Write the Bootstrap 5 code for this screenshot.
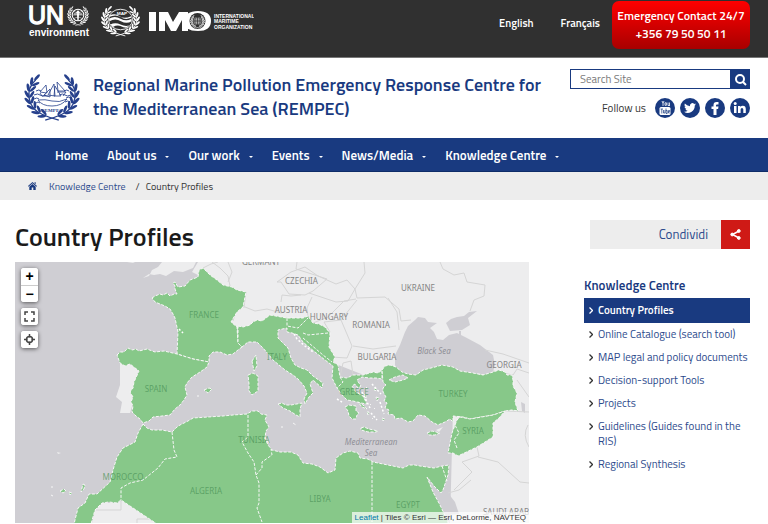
<!DOCTYPE html>
<html lang="en">
<head>
<meta charset="utf-8">
<meta name="viewport" content="width=device-width, initial-scale=1">
<title>Country Profiles - REMPEC</title>
<link href="https://cdn.jsdelivr.net/npm/bootstrap@5.3.0/dist/css/bootstrap.min.css" rel="stylesheet">
<style>
:root{--navy:#193a80}
body{font-family:"Titillium Web",Roboto,"Liberation Sans",sans-serif;font-size:11px;color:#333;background:#fff}
a{text-decoration:none;color:#2c4a8c}
svg{display:block}
.topbar{background:#303030;height:58px;border-bottom:1px solid #777;padding:0 18px 0 28px}
.topbar a{color:#fff;font-size:11px;font-weight:600}
.langs{gap:27px;margin:15px 12px 0 0}
.topbar .emergency{background:linear-gradient(#f00,#a80000);border-radius:7px;font-size:12px;line-height:18px;width:138px;height:48px;margin-top:1px;padding-top:6px}
.masthead{padding:11px 18px 0 24px;height:80px;gap:13px}
.site-title{color:var(--navy);font-size:18px;line-height:24px;font-weight:600;margin:4px 0 0}
.tools{width:180px}
.search-field{height:20px;min-width:0;border:1px solid var(--navy);padding:0 9px;font-size:11px;outline:0}
.search-field::placeholder{color:#777}
.search-btn{width:19px;height:20px;border:0;background:var(--navy);padding:0}
.follow{gap:5px;margin-top:9px}
.mainnav{background:var(--navy);min-height:34px;padding:0 55px;gap:19px;border-bottom:1px solid #0e2c68}
.mainnav a{color:#fff;font-size:13px;font-weight:600;line-height:20px}
.mainnav .dropdown-toggle::after{margin-left:9px;border-width:2px;vertical-align:2px}
.crumbs{background:#ededed;height:28px;padding:0 28px;font-size:10px}
.crumbs .slash{margin:0 6px 0 10px}
.page{padding:19px 18px 0 15px;gap:55px}
.page h1{font-size:26px;line-height:36px;font-weight:600;color:#1a1a1a;margin:0 0 7px}
.side{width:166px}
.share{background:#ededed;height:29px;margin:1px 0 0 6px;font-size:13px;gap:13px}
.share button{width:29px;height:29px;border:0;background:#cf1a16;padding:0}
.side h2{font-size:13px;line-height:18px;font-weight:600;color:var(--navy);margin:27px 0 4px}
.side li a{padding:4px 0 4px 5px;line-height:15px;font-size:11px;gap:5px}
.side li.current a{background:var(--navy);color:#fff;font-weight:600;padding-top:5px;padding-bottom:5px}
.side li svg{margin-top:4px;flex:none}
.mapbox{background:#cfced3;overflow:hidden}
.mapbtns{top:6px;left:6px;gap:6px}
.mapbtns button{width:17px;height:17px;border:0;background:#fff;padding:0;font:bold 14px/17px "Liberation Sans",sans-serif;color:#000}
.ctl{border-radius:3px;box-shadow:0 1px 4px rgba(0,0,0,.6);overflow:hidden;background:#fff}
.ctl button+button{border-top:1px solid #ccc}
.attrib{font:8px/11px "Liberation Sans",sans-serif;background:rgba(255,255,255,.7);padding:0 3px;right:0;bottom:0}
.attrib a{color:#0078a8}
.logo-text{font-family:"Liberation Sans",sans-serif;font-weight:700}
.place{font-family:"Noto Sans",sans-serif;font-size:8px}
</style>
<script src="https://cdn.jsdelivr.net/npm/bootstrap@5.3.0/dist/js/bootstrap.bundle.min.js"></script>
</head>
<body>
<div class="topbar d-flex align-items-start">
 <svg width="226" height="40" viewBox="28 0 226 40" fill="#fff" role="img" aria-label="UN environment, MAP, International Maritime Organization">
  <defs>
   <g id="leaf" fill="currentColor"><ellipse cx="-18.500" cy="0" rx="1.100" ry="3.200" transform="rotate(-28 -18.500 0)"/><ellipse cx="-14.800" cy="0" rx="1" ry="3" transform="rotate(28 -14.800 0)"/></g>
   <g id="laurel"><path d="M5 20Q-2 18-7 15.500A17 17 0 0 1-12-12" fill="none" stroke="currentColor" stroke-width="1"/>
   <use href="#leaf" transform="rotate(-66)"/><use href="#leaf" transform="rotate(-49)"/><use href="#leaf" transform="rotate(-32)"/><use href="#leaf" transform="rotate(-15)"/><use href="#leaf" transform="rotate(2)"/><use href="#leaf" transform="rotate(19)"/><use href="#leaf" transform="rotate(36)"/><ellipse cx="-11" cy="-14" rx="1" ry="3" fill="currentColor" transform="rotate(40 -11 -14)"/></g>
  </defs>
  <text class="logo-text" x="28" y="24" font-size="25" style="font-weight:400" stroke="#fff" stroke-width="1.300">UN</text>
  <text class="logo-text" x="29" y="36" font-size="10">environment</text>
  <g color="#fff" transform="translate(78 15) scale(.53)"><use href="#laurel"/><use href="#laurel" transform="scale(-1 1)"/><circle r="11" fill="none" stroke="#fff" stroke-width="2"/><path d="M0-11V11M-11 0H11M-8-7Q0-1 8-7M-8 7Q0 1 8 7" stroke="#fff" stroke-width="1" fill="none"/><circle cy="-5" r="3"/><path d="M-2-3h4l-1 14h-2zM-8-3h16v2h-16z"/></g>
  <g color="#fff" transform="translate(120.500 19.500) scale(.96 .82)"><use href="#laurel"/><use href="#laurel" transform="scale(-1 1)"/><circle r="12.500" fill="none" stroke="#fff"/><path d="M-12-1q6-4 12 0t11.500 0v3q-5 4-11 0t-12 0zM-10.500 6q5-3 10.500 0t9 1l-3 3q-3 0-6-2t-8 1zM-11.500-5q6-3 10.500 1t12 0v2q-6 3-11-1t-12 0z"/><text class="logo-text" x="-4" y="-5" font-size="5">MAP</text></g>
  <path d="M149 12h7v19h-7zM159 12h9l5 10 6-10h9v19h-6V20l-6 11h-5l-6-11v11h-6zM184 21q1-10 14-10 13 0 13 10 0 10-13 10-14 0-14-10z"/>
  <circle cx="197.500" cy="21" r="8" fill="#303030"/><g color="#fff" transform="translate(197.500 21) scale(.36)"><use href="#laurel"/><use href="#laurel" transform="scale(-1 1)"/><circle r="11" fill="#aaa"/><path d="M-7-8Q0-12 7-8V8Q0 12-7 8zM-10 0H10M0-11V11" stroke="#303030" stroke-width="2" fill="none"/></g>
  <g class="logo-text" font-size="5"><text x="214" y="17.500">INTERNATIONAL</text><text x="214" y="23">MARITIME</text><text x="214" y="28.500">ORGANIZATION</text></g>
 </svg>
 <nav class="langs d-flex ms-auto" aria-label="Language"><a href="#">English</a><a href="#">Français</a></nav>
 <a href="#" class="emergency text-center">Emergency Contact 24/7<br>+356 79 50 50 11</a>
</div>
<header class="masthead d-flex">
 <svg class="flex-shrink-0 mt-1" width="56" height="50" viewBox="0 0 56 50" color="#26408c" stroke="#26408c" fill="none" role="img" aria-label="REMPEC">
  <g stroke="none" transform="translate(28 22) scale(1.360 1.260)"><use href="#laurel"/><use href="#laurel" transform="scale(-1 1)"/></g>
  <g stroke-width=".8"><path d="M14 27q4 6 14 6t15-7q-8 4-15 2t-14-1z" fill="#fff"/><path d="M16 19l6-7 1 8zM24 22l6-11 1 12zM34 18l-1-9 8 9zM20 22l6-6v8zM31 13l6 10h-7zM16 20l2 3h6M33 19h9l-3 4"/></g>
  <path d="M12 18q3-2 5 0M40 18q3-2 5 0M10 22q4-2 6 0t6 0M35 22q4-2 6 0t6 0M10 26q3-2 5 0M42 25q3-2 5 0M12 30q2-2 4 0M41 29q3-2 5 0" stroke-width=".9"/>
  <text x="28" y="39" text-anchor="middle" font-size="5" font-family="Liberation Serif,serif" font-weight="700" fill="#26408c" stroke="none">REMPEC</text>
 </svg>
 <p class="site-title flex-grow-1">Regional Marine Pollution Emergency Response Centre for<br>the Mediterranean Sea (REMPEC)</p>
 <div class="tools flex-shrink-0">
  <form class="d-flex"><input class="search-field flex-grow-1" type="search" placeholder="Search Site" aria-label="Search Site"><button type="button" class="search-btn" aria-label="Search"><svg class="mx-auto" width="13" height="13" fill="none" stroke="#fff" stroke-width="2"><circle cx="6" cy="6" r="4"/><path d="M9 9l3 3"/></svg></button></form>
  <div class="follow d-flex justify-content-end align-items-center"><span class="me-1">Follow us</span>
   <a href="#" aria-label="YouTube"><svg width="20" height="20"><circle cx="10" cy="10" r="10" fill="#193a80"/><rect x="4.500" y="9" width="11" height="8" rx="1.500" fill="#fff"/><path d="M7 3l1 2.200V8M9 3L8 5.200M10 4.800v2.500h1.400V4.800zM13 4.500v3h1.500M14.500 4.500V8" fill="none" stroke="#fff" stroke-width=".8"/><path d="M5.500 11h2.500M6.800 11v4.500M8.500 12v3h1.500v-3M11 10.500v5h1.200v-3H11M14.700 15h-1.200v-2.500h1.200v1.200h-1.200" fill="none" stroke="#193a80" stroke-width=".7"/></svg></a>
   <a href="#" aria-label="Twitter"><svg width="20" height="20"><circle cx="10" cy="10" r="10" fill="#193a80"/><path transform="translate(4 4) scale(.5)" fill="#fff" d="M24 4.600c-.9.400-1.800.7-2.800.8 1-.6 1.800-1.600 2.200-2.700-1 .6-2 1-3.100 1.200A4.900 4.900 0 0 0 11.900 8.400 14 14 0 0 1 1.700 3.200a4.900 4.900 0 0 0 1.500 6.600c-.8 0-1.600-.2-2.200-.6 0 2.300 1.600 4.400 3.900 4.900-.7.200-1.500.2-2.200.1a4.900 4.900 0 0 0 4.600 3.400A9.900 9.900 0 0 1 0 19.500 14 14 0 0 0 21.500 7.100c1-.7 1.800-1.600 2.500-2.500z"/></svg></a>
   <a href="#" aria-label="Facebook"><svg width="20" height="20"><circle cx="10" cy="10" r="10" fill="#193a80"/><path fill="#fff" d="M8.500 17v-6H6.500V8.500h2V7q0-3 3-3h2v2.500h-1.500q-1 0-1 1v1h2.500l-.4 2.500H11.500v6z"/></svg></a>
   <a href="#" aria-label="LinkedIn"><svg width="20" height="20"><circle cx="10" cy="10" r="10" fill="#193a80"/><path fill="#fff" d="M4 8h2.500v7H4zM8 8h2.400v1q.8-1.200 2.400-1.200 3 0 3 3.400V15h-2.500v-3.500q0-1.600-1.300-1.600-1.400 0-1.400 1.700V15H8z"/><circle cx="5.200" cy="5.600" r="1.500" fill="#fff"/></svg></a>
  </div>
 </div>
</header>
<nav class="mainnav d-flex align-items-center" aria-label="Main">
 <a href="#">Home</a><a href="#" class="dropdown-toggle">About us</a><a href="#" class="dropdown-toggle">Our work</a><a href="#" class="dropdown-toggle">Events</a><a href="#" class="dropdown-toggle">News/Media</a><a href="#" class="dropdown-toggle">Knowledge Centre</a>
</nav>
<nav class="crumbs d-flex align-items-center" aria-label="Breadcrumb">
 <a href="#" aria-label="Home" class="pe-1 me-2"><svg width="9" height="8" fill="#193a80"><path d="M4.500 0L9 4l-.6.700L4.500 1.300.6 4.700 0 4zM4.500 2l3.200 2.800V8H5.300V5.500H3.700V8H1.300V4.800zM6.500.3h1.200v2l-1.200-1z"/></svg></a>
 <a href="#">Knowledge Centre</a><span class="slash">/</span><span>Country Profiles</span>
</nav>
<div class="page d-flex align-items-start">
 <main class="flex-grow-1">
  <h1>Country Profiles</h1>
  <div class="mapbox position-relative">
   <svg width="100%" viewBox="15 262 514 261" role="img" aria-label="Map of Mediterranean countries">
    <rect x="15" y="262" width="514" height="261" fill="#cfced3"/>
    <g fill="#ededee">
     <path d="M143 278l6-2 3-6 6-3 4-5h34l-3 6-10 4-9-1-8 5-6-2-6 1-5-1zM127 262h8l-2 1zM198 262h331v261H450L453 410 300 350 220 350 195 300l3-25-6-3z"/>
     <path d="M120 364l10 0 9 5-3 11-4 10 1 13-3 10h-10l2-11-6-5 4-12zM92 523l3-13 7-7h15l6-3 35 23zM57 452l4 1-3 1z"/>
    </g>
    <path fill="#cfced3" d="M143 423l42-30 24-37 30-12 22-10 27-8 12 10 20 13 16 15 8 14 40-4 5 23 63 18-3 47-7 20-300-20zM395 365L395 355 400 345 405 332 408 326 415 320 418 317 425 318 428 322 437 323 430 328 434 332 437 339 443 340 449 335 457 333 465 337 480 345 493 355 495 365 492 375 440 370 400 378zM446 323L451 319 457 317 464 316 469 312 477 311 468 318 470 325 462 330 450 331zM459 334L459 331 461 331 461 335zM521 402l4 2 0 9-3-2zM427 477l14 16 7 0 7 9 4 12-13 1-13-22z"/>
    <g fill="none" stroke="#d5d5d5" stroke-width="1">
     <path d="M203 268l8-4 7-2M212 262l8 6 8 8 2 10M228 262l4 10-4 10M233 321l4-14 8 0 10 4 12-2 14 4 5-2M246 292l-2 15M277 282l14-10 14-5 13 9 9 3-14 12-8 4-16-1-8-12zM297 262l-1 7 22 7 18 8 11-4 8 9-7 12-12 1-18-6-9-3M281 302l1-7 9 1 10-1M312 297l-5 11 1 9M313 323l15-6 16-16 12-2M364 262l1 11-10 16 2 9 28-1 14 12 2 12 10-1M388 298l9 14 2 18M341 320l16-20M330 332l-6-10 17-2 11 26-5 12-16-1M353 346l20 3 23-3M340 377l3-14 8-2 2 14M440 262l3 7 11 6 10-2 3 9 18 3-1 11-10 4-4 11M485 350l18 4 26 9M493 371l20 4 4-6 12 4M517 380l12 17M505 411l24 1M477 447l2 9-17 6 10 10-18 18M478 457l20 5 22 20 9 1M448 493l11-3 12-10M96 510h25v-10M137 523v-4h17M528 425q-6 10 1 22"/>
    </g>
    <g fill="#87c889" stroke="#f7f7f7" stroke-width="1" stroke-dasharray="3 1.500" stroke-linejoin="round">
     <path d="M152 298L155 296 160 294 163 295 167 293 170 296 174 294 177 294 175 289 175 286 173 283 175 282 178 287 185 286 190 280 198 277 199 270 203 268 206 271 210 275 217 280 223 285 232 287 237 290 246 292 243 307 237 312 231 322 237 327 238 343 242 347 238 350 233 354 227 355 220 352 213 352 209 356 209 362 193 359 177 354 178 332 175 318 173 314 170 309 165 306 160 304 155 302z"/>
     <path d="M117 355L120 352 124 352 128 348 132 350 136 349 139 351 147 349 155 352 164 351 177 354 193 359 209 362 207 367 203 370 197 374 192 377 187 383 185 387 187 395 184 400 180 405 175 409 170 415 162 416 153 417 149 421 143 423 140 419 136 416 132 412 133 406 131 402 133 397 130 392 133 388 134 382 139 371 130 364 125 366 120 363z"/>
     <path d="M143 424L147 428 152 430H162L172 432 177 427 180 425 188 421 193 418 223 416 233 415 247 414 252 411 258 411 261 414 267 415 265 420 269 427 266 431 265 438 268 445 272 450 280 452 291 452 298 455 303 463 312 464 320 467 328 473 335 470 336 458 343 453 350 451 358 453 360 458 368 459 373 462 388 465 403 468 409 465 415 465 420 466 427 467 434 468 442 466 442 466 449 465 448 475 443 490 441 493 434 486 427 477 433 492 440 505 448 522V524H157L121 500 117 503 109 502 102 503 95 510 91 524H74L78 508 85 503 89 494 97 494 110 482 113 470 117 457 123 448 135 442 138 433z"/>
     <path d="M238 326L243 327 250 325 253 322 257 320 262 321 270 315 287 318 303 318 308 316 313 323 319 324 325 327 330 333 329 347 335 357 333 362 338 365 340 377 347 378 353 375 363 375 373 372 378 373 382 370 382 379 376 378 369 378 362 377 357 380 361 386 358 388 355 384 352 386 356 392 363 396 367 404 361 403 353 401 347 400 343 396 337 388 332 378 333 366 325 360 310 348 303 342 298 335 292 333 287 332 287 328 278 330 278 338 288 348 291 358 295 365 301 368 307 370 313 376 323 383 322 388 313 380 310 384 313 393 309 397 305 404 304 399 307 393 304 386 298 379 293 375 285 370 273 360 269 355 263 348 257 342 248 342 242 347 238 343z"/>
     <path d="M382 370L385 366 390 365 396 367 402 372 408 374 416 375 423 370 435 367 442 365 453 367 460 371 473 373 483 375 493 372 499 370 505 372 507 375 512 375 513 380 513 386 517 393 515 402 518 411 512 410 505 411 499 413 493 415 487 416 470 419 463 417 453 416 453 422 450 419 445 422 438 425 432 422 425 416 418 415 413 421 408 422 401 418 395 419 394 415 388 414 389 410 385 408 387 403 384 401 386 397 383 392 383 388 386 385 383 382z"/>
     <path d="M455 425L457 420 460 417 470 419 493 415 505 411 499 418 493 423 493 437 485 442 477 447 458 456 453 453 448 453 452 433z"/>
     <path d="M278 404l4-1 4 2 5 0 11-2-2 6 0 8-4-2-6-4-7-3zM248 375l5-2 5 3v15l-6 4-3-4 0-7zM252 361l4-6 1 11-3 5zM204 390l5-2 3 1-4 4zM345 407l4-2 7 1 0 5 3 2-2 2-1 4-4 0-3-3-1-5zM361 428l3-1 5 2 9 2-2 1-8 0-7-2zM427 433l5-2 4 1 4 1-5 2-6 0zM374 388l3 1-2 2zM376 397l3 1-2 3zM363 394l3 1 0 3zM382 418l3 1-2 2zM367 412l2 0-1 3zM358 402l5 3 4 4-5-2zM370 404l1 1M374 408l1 1M366 387l1 1M372 418l1 1"/>
     <path d="M60 491l4-2 2 2-3 2zM69 492l3 1-2 2zM83 484l2 1-1 4-3 3zM51 487l2 0M51 495l2 1M281 427l2 0M293 423l3 2M197 396l2 0"/>
     <path fill="none" d="M172 432l2 18 3 7-12 2-7 9-15 12-13 3-9 5v12M248 415v22l-6 5 6 11 6 9 2 13 3 8v20l-2 5 5 14M256 475l6-7v-6l10-7-1-6M372 462v60M442 466l5 15M287 318v8l11 2 10-10M303 333l5 2 20-2M303 338l20 17 9 7M340 377l3 5-6 6M457 448l-3-8 5-7-4-8"/>
     <path fill="#cfced3" d="M389 380l6-3 8-2 5 3-5 2-8 2z"/>
    </g>
    <path fill="#ededee" d="M436 430l7-3-4 5z"/>
    <path d="M294 334l3 5 8 7 8 6M337 399l5 3M362 392l8 16M372 384l9 10M380 402l4 12M371 413l6 7M265 438l4 5M179 329l4 4" fill="none" stroke="#fff" stroke-width="1.500" stroke-dasharray="2 2"/>
    <g class="place" text-anchor="middle" fill="#858585">
     <text x="261" y="265">GERMANY</text><text x="301.500" y="284">CZECHIA</text><text x="291" y="313">AUSTRIA</text><text x="329" y="320">HUNGARY</text><text x="418" y="291">UKRAINE</text><text x="371" y="328">ROMANIA</text><text x="377" y="360">BULGARIA</text><text x="504" y="368">GEORGIA</text><text x="510" y="515">SAUDI ARABIA</text>
     <g fill="#4d9459" fill-opacity=".75"><text x="204" y="318">FRANCE</text><text x="156" y="392">SPAIN</text><text x="277" y="360">ITALY</text><text x="354" y="395">GREECE</text><text x="453" y="397">TURKEY</text><text x="473" y="434">SYRIA</text><text x="254" y="443">TUNISIA</text><text x="123" y="480">MOROCCO</text><text x="206" y="494">ALGERIA</text><text x="320" y="502">LIBYA</text><text x="408" y="508">EGYPT</text></g>
     <g font-style="italic" fill="#909097"><text x="434" y="354">Black Sea</text><text x="371" y="445">Mediterranean</text><text x="371" y="456">Sea</text></g>
    </g>
   </svg>
   <div class="mapbtns position-absolute d-flex flex-column">
    <div class="ctl d-flex flex-column"><button type="button" aria-label="Zoom in">+</button><button type="button" aria-label="Zoom out">−</button></div>
    <div class="ctl"><button type="button" aria-label="Full screen" class="d-block"><svg class="mx-auto" width="11" height="11" fill="none" stroke="#444" stroke-width="1.500"><path d="M1 4V1h3M7 1h3v3M10 7v3H7M4 10H1V7"/></svg></button></div>
    <div class="ctl"><button type="button" aria-label="Reset view" class="d-block"><svg class="mx-auto" width="11" height="11" fill="none" stroke="#444" stroke-width="1.500"><circle cx="5.500" cy="5.500" r="3"/><path d="M5.500 0v3.500M5.500 7.500V11M0 5.500h3.500M7.500 5.500H11"/></svg></button></div>
   </div>
   <div class="attrib position-absolute"><a href="#">Leaflet</a> | Tiles © Esri — Esri, DeLorme, NAVTEQ</div>
  </div>
 </main>
 <aside class="side flex-shrink-0">
  <div class="share d-flex align-items-center justify-content-end"><a href="#">Condividi</a><button type="button" aria-label="Share"><svg class="mx-auto" width="11" height="11" fill="#fff" stroke="#fff"><path d="M9 2L2.500 5.500 9 9" fill="none" stroke-width="1.500"/><circle cx="8.800" cy="2" r="1.400"/><circle cx="2.200" cy="5.500" r="1.400"/><circle cx="8.800" cy="9" r="1.400"/></svg></button></div>
  <h2>Knowledge Centre</h2>
  <ul class="list-unstyled m-0">
   <li class="current"><a href="#" class="d-flex"><svg width="4" height="7" fill="none" stroke="#fff" stroke-width="1.300"><path d="M.5.500l3 3-3 3"/></svg><span>Country Profiles</span></a></li>
   <li><a href="#" class="d-flex"><svg width="4" height="7" fill="none" stroke="#333" stroke-width="1.300"><path d="M.5.500l3 3-3 3"/></svg><span>Online Catalogue (search tool)</span></a></li>
   <li><a href="#" class="d-flex"><svg width="4" height="7" fill="none" stroke="#333" stroke-width="1.300"><path d="M.5.500l3 3-3 3"/></svg><span>MAP legal and policy documents</span></a></li>
   <li><a href="#" class="d-flex"><svg width="4" height="7" fill="none" stroke="#333" stroke-width="1.300"><path d="M.5.500l3 3-3 3"/></svg><span>Decision-support Tools</span></a></li>
   <li><a href="#" class="d-flex"><svg width="4" height="7" fill="none" stroke="#333" stroke-width="1.300"><path d="M.5.500l3 3-3 3"/></svg><span>Projects</span></a></li>
   <li><a href="#" class="d-flex"><svg width="4" height="7" fill="none" stroke="#333" stroke-width="1.300"><path d="M.5.500l3 3-3 3"/></svg><span>Guidelines (Guides found in the RIS)</span></a></li>
   <li><a href="#" class="d-flex"><svg width="4" height="7" fill="none" stroke="#333" stroke-width="1.300"><path d="M.5.500l3 3-3 3"/></svg><span>Regional Synthesis</span></a></li>
  </ul>
 </aside>
</div>
</body>
</html>
